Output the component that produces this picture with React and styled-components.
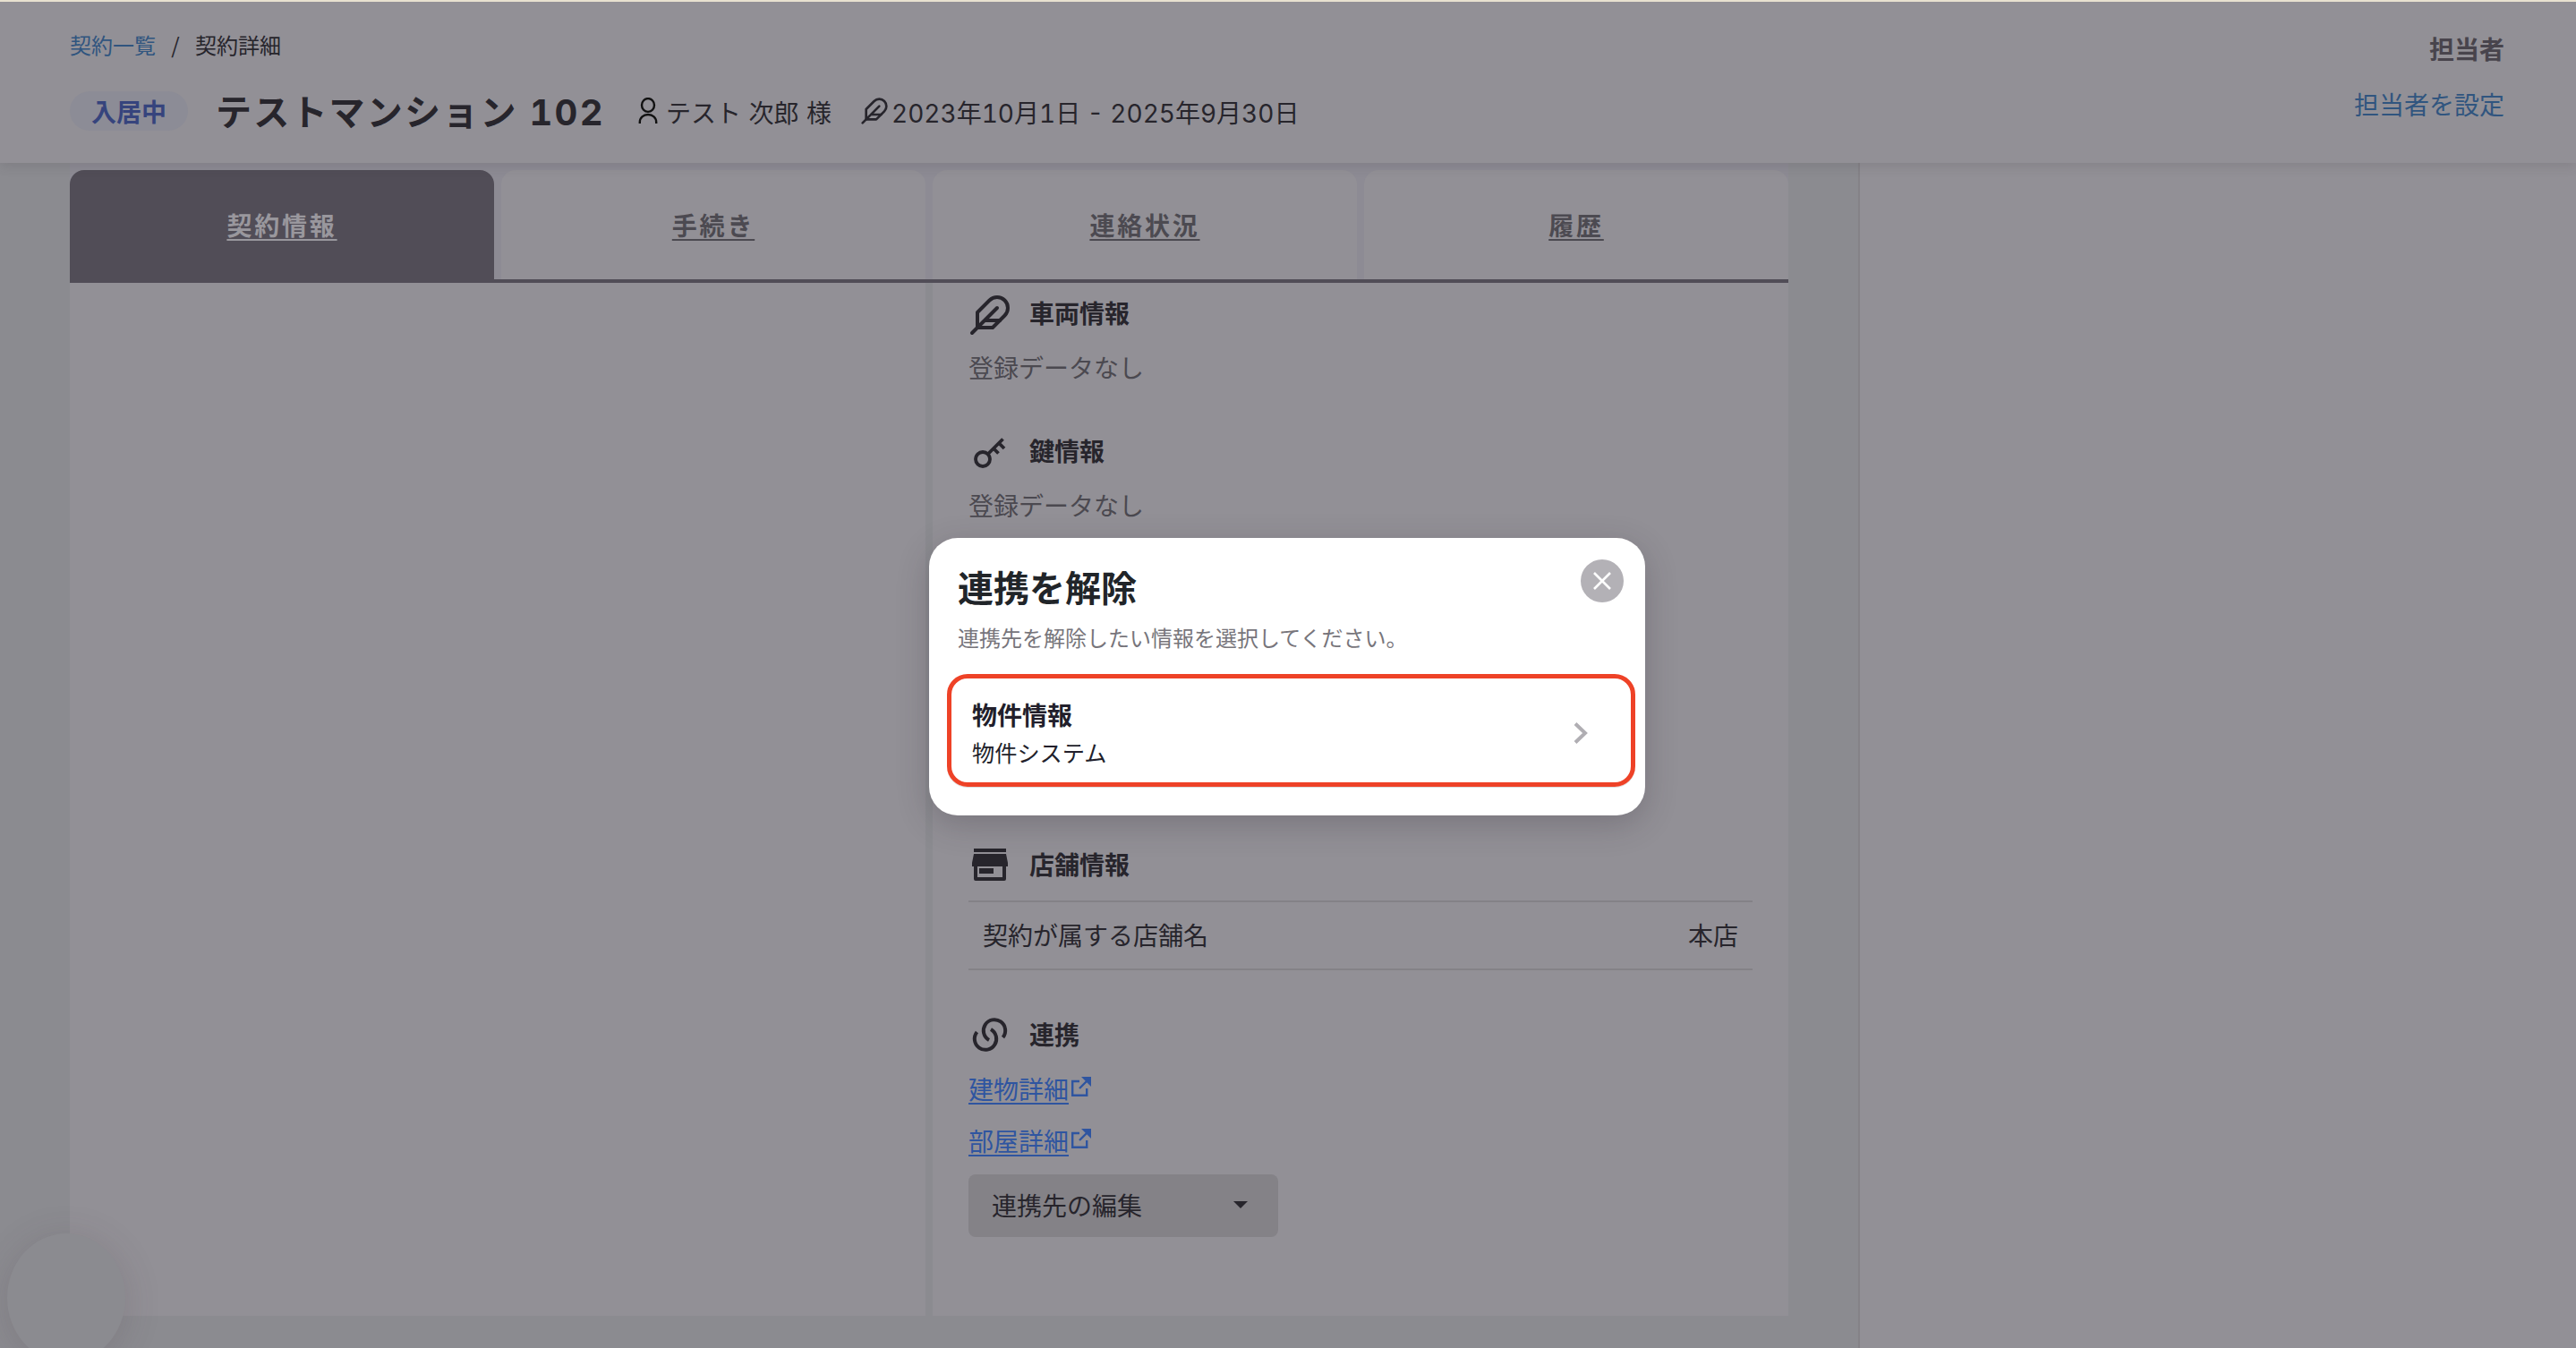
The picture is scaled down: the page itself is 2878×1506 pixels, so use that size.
import React from "react";
import styled, { createGlobalStyle } from "styled-components";

const c = {
  surface: "#929096",
  page: "#8b8b90",
  ink: "#27252c",
  muted: "#4b4950",
  tab: "#514d57",
  line: "#848287",
  link: "#30557f",
};

const GlobalStyle = createGlobalStyle`
  *, *::before, *::after { box-sizing: border-box; }
  body {
    margin: 0;
    background: ${c.page};
    color: ${c.ink};
    font-family: "Noto Sans CJK JP", sans-serif;
    font-size: 28px;
    line-height: 40px;
  }
  h1, h2, h3, p { margin: 0; }
  svg { display: block; flex: none; }
`;

const Screen = styled.div`
  height: 1506px;
  overflow: hidden;
  display: flex;
  flex-direction: column;
  position: relative;
`;

const Header = styled.header`
  flex: none;
  height: 182px;
  padding: 0 80px 0 78px;
  display: flex;
  justify-content: space-between;
  background: ${c.surface};
  border-top: 2px solid #e8e1d0;
  box-shadow: 0 4px 12px rgba(60, 50, 60, 0.14);
  position: relative;
`;

const HeaderMain = styled.div`
  padding-top: 28px;
`;

const Breadcrumb = styled.nav`
  display: flex;
  gap: 16px;
  font-size: 24px;
  line-height: 40px;
`;

const CrumbLink = styled.a`
  color: ${c.link};
`;

const Slash = styled.span`
  width: 12px;
  text-align: center;
`;

const TitleRow = styled.div`
  display: flex;
  align-items: center;
  height: 44px;
  margin-top: 32px;
`;

const Badge = styled.span`
  width: 132px;
  height: 44px;
  border-radius: 22px;
  background: #8c8c96;
  color: #36447d;
  font-weight: 700;
  line-height: 44px;
  text-align: center;
`;

const Title = styled.h1`
  width: 503px;
  padding: 4px 0 0 31px;
  font-family: Inter, "Noto Sans CJK JP", sans-serif;
  font-variant-numeric: tabular-nums;
  font-size: 40px;
  line-height: 44px;
  letter-spacing: 2.200px;
  white-space: nowrap;
`;

const Meta = styled.span`
  display: flex;
  align-items: center;
  margin-right: 32px;
  gap: ${(p) => p.$gap};
  font-family: Inter, "Noto Sans CJK JP", sans-serif;
  font-variant-numeric: tabular-nums;
  white-space: nowrap;
`;

const MetaText = styled.span`
  padding-top: 5px;
  word-spacing: ${(p) => (p.$loose ? "1px" : "0")};
`;

const Assignee = styled.div`
  padding-top: 32px;
  display: flex;
  flex-direction: column;
  align-items: flex-end;
  gap: 22px;
`;

const AssigneeLabel = styled.span`
  font-weight: 700;
  color: #48444c;
`;

const Body = styled.div`
  flex: 1;
  display: flex;
`;

const Main = styled.main`
  width: 2076px;
  padding: 0 78px 36px;
  display: flex;
  flex-direction: column;
`;

const Tabs = styled.div`
  flex: none;
  height: 134px;
  padding-top: 8px;
  display: grid;
  grid-template-columns: repeat(4, 474px);
  gap: 8px;
  background: #8d8b94;
  border-bottom: 4px solid ${c.tab};
`;

const Tab = styled.a`
  display: flex;
  justify-content: center;
  padding-top: 41px;
  border-radius: 16px 16px 0 0;
  background: ${(p) => (p.$active ? c.tab : c.surface)};
  color: ${(p) => (p.$active ? "#99979d" : "#4c4a51")};
  font-weight: 700;
  letter-spacing: 2.8px;
  text-decoration: underline;
  text-decoration-thickness: 2px;
  text-underline-offset: 4px;
`;

const Columns = styled.div`
  flex: 1;
  display: grid;
  grid-template-columns: 956px 956px;
  gap: 8px;
`;

const Column = styled.section`
  background: ${c.surface};
  padding: 12px 40px 0;
`;

const Block = styled.div`
  height: ${(p) => p.$h}px;
`;

const BlockHead = styled.div`
  display: flex;
  align-items: center;
  gap: 20px;
  height: 48px;
`;

const BlockTitle = styled.h3`
  font-size: 28px;
  line-height: 40px;
  padding-bottom: ${(p) => (p.$raised ? 6 : 2)}px;
`;

const IconBox = styled.span`
  width: 48px;
  height: 48px;
  display: grid;
  place-items: center;
`;

const Empty = styled.p`
  color: ${c.muted};
  margin-top: 14px;
`;

const Fact = styled.div`
  height: 78px;
  margin-top: 16px;
  padding: 0 16px 2px;
  display: flex;
  align-items: center;
  justify-content: space-between;
  border: solid ${c.line};
  border-width: 2px 0;
`;

const ExternalLink = styled.a`
  display: flex;
  gap: 3px;
  height: 58px;
  padding-top: 16px;
  color: #2f55a0;

  svg { margin-top: 7px; }
`;

const LinkText = styled.span`
  text-decoration: underline;
  text-decoration-thickness: 2px;
  text-underline-offset: 4px;
`;

const Select = styled.button`
  width: 346px;
  height: 70px;
  margin-top: 16px;
  padding: 0 34px 2px 26px;
  display: flex;
  align-items: center;
  justify-content: space-between;
  border: 0;
  border-radius: 8px;
  background: ${c.line};
  color: ${c.ink};
  font: inherit;
`;

const Caret = styled.span`
  border: 8px solid transparent;
  border-top-color: ${c.ink};
  border-bottom: 0;
`;

const Aside = styled.aside`
  flex: 1;
  background: ${c.surface};
  border-left: 2px solid ${c.line};
`;

const Fab = styled.div`
  position: absolute;
  left: 8px;
  top: 1378px;
  width: 132px;
  height: 144px;
  border-radius: 50%;
  background: ${c.page};
  box-shadow: 0 6px 40px rgba(70, 55, 65, 0.18);
`;

const Dialog = styled.div`
  position: absolute;
  left: 1038px;
  top: 601px;
  width: 800px;
  height: 310px;
  padding: 32px 20px 0;
  border-radius: 32px;
  background: #fff;
  box-shadow: 0 10px 36px rgba(40, 35, 45, 0.24);
`;

const DialogTitle = styled.h2`
  padding-left: 12px;
  font-size: 40px;
  line-height: 44px;
  color: #212529;
`;

const DialogText = styled.p`
  padding-left: 12px;
  margin-top: 15px;
  font-size: 24px;
  line-height: 40px;
  color: #77757b;
`;

const Close = styled.button`
  position: absolute;
  right: 24px;
  top: 24px;
  width: 48px;
  height: 48px;
  padding: 0;
  border: 0;
  border-radius: 50%;
  display: grid;
  place-items: center;
  background: #b3b1b6;
`;

const Option = styled.div`
  width: 769px;
  height: 126px;
  margin-top: 21px;
  padding: 5px 48px 0 23px;
  display: flex;
  align-items: center;
  justify-content: space-between;
  border: 5.5px solid #ee4227;
  border-radius: 23px;
  box-shadow: 0 1px 0 #ddd;
`;

const OptionTitle = styled.h3`
  font-size: 28px;
  line-height: 42px;
  color: #221f2b;
`;

const OptionSub = styled.p`
  font-size: 25.2px;
  line-height: 42px;
  color: #221f2b;
`;

const Feather = ({ size, width = 2 }) => (
  <svg width={size} height={size} viewBox="0 0 24 24" fill="none" stroke={c.ink} strokeWidth={width} strokeLinecap="round" strokeLinejoin="round">
    <path d="M20.24 12.24a6 6 0 0 0-8.49-8.49L5 10.5V19h8.5z" />
    <path d="M16 8 2 22M17.5 15H9" />
  </svg>
);

const Person = () => (
  <svg width="22" height="30" viewBox="0 0 22 30" fill="none" stroke="#111" strokeWidth="2.4">
    <ellipse cx="11" cy="8.5" rx="7" ry="7.4" />
    <path d="M1.8 29v-1.5c0-5 4-8.5 9.2-8.5s9.2 3.5 9.2 8.5V29" />
  </svg>
);

const Key = () => (
  <svg width="36" height="34" viewBox="0 0 36 34" fill="none" stroke={c.ink} strokeWidth="3.8">
    <circle cx="10" cy="24" r="8" />
    <path d="M15.500 18.500 32.500 1.500M28 6l6 6M22 12l5.500 5.500" />
  </svg>
);

const Store = () => (
  <svg width="40" height="36" viewBox="0 0 40 36" fill={c.ink}>
    <path d="M2 0h36v4H2zM2 6h36l2 10v4h-2v14q0 2-2 2H4q-2 0-2-2V20H0v-4zM6 20v12h28V20z" fillRule="evenodd" />
    <path d="M8 22h16v6H8z" />
  </svg>
);

const Chain = () => (
  <svg width="40" height="40" viewBox="0 0 40 40" fill="none" stroke={c.ink} strokeWidth="4">
    <path d="M19 26a12.200 12.200 0 1 1 15.500-3" />
    <path d="M21 14a12.200 12.200 0 1 1-15.500 3" />
  </svg>
);

const External = () => (
  <svg width="22" height="22" viewBox="0 0 22 22" fill="none" stroke="#2f55a0" strokeWidth="2.400">
    <path d="M9 5H1.200v15.800h16V13M9 13 18 4" />
    <path d="M11 0h11v11z" fill="#2f55a0" stroke="none" />
  </svg>
);

export default function App() {
  return (
    <>
      <GlobalStyle />
      <Screen>
        <Header>
          <HeaderMain>
            <Breadcrumb>
              <CrumbLink>契約一覧</CrumbLink>
              <Slash>/</Slash>
              <span>契約詳細</span>
            </Breadcrumb>
            <TitleRow>
              <Badge>入居中</Badge>
              <Title>テストマンション 102</Title>
              <Meta $gap="9px">
                <Person />
                <MetaText $loose>テスト 次郎 様</MetaText>
              </Meta>
              <Meta $gap="3px">
                <Feather size={32} />
                <MetaText>2023年10月1日 - 2025年9月30日</MetaText>
              </Meta>
            </TitleRow>
          </HeaderMain>
          <Assignee>
            <AssigneeLabel>担当者</AssigneeLabel>
            <CrumbLink>担当者を設定</CrumbLink>
          </Assignee>
        </Header>
        <Body>
          <Main>
            <Tabs>
              <Tab $active>契約情報</Tab>
              <Tab>手続き</Tab>
              <Tab>連絡状況</Tab>
              <Tab>履歴</Tab>
            </Tabs>
            <Columns>
              <Column />
              <Column>
                <Block $h={154}>
                  <BlockHead>
                    <IconBox><Feather size={48} /></IconBox>
                    <BlockTitle $raised>車両情報</BlockTitle>
                  </BlockHead>
                  <Empty>登録データなし</Empty>
                </Block>
                <Block $h={460}>
                  <BlockHead>
                    <IconBox><Key /></IconBox>
                    <BlockTitle $raised>鍵情報</BlockTitle>
                  </BlockHead>
                  <Empty>登録データなし</Empty>
                </Block>
                <Block $h={190}>
                  <BlockHead>
                    <IconBox><Store /></IconBox>
                    <BlockTitle>店舗情報</BlockTitle>
                  </BlockHead>
                  <Fact>
                    <span>契約が属する店舗名</span>
                    <span>本店</span>
                  </Fact>
                </Block>
                <BlockHead>
                  <IconBox><Chain /></IconBox>
                  <BlockTitle>連携</BlockTitle>
                </BlockHead>
                <ExternalLink><LinkText>建物詳細</LinkText><External /></ExternalLink>
                <ExternalLink><LinkText>部屋詳細</LinkText><External /></ExternalLink>
                <Select>連携先の編集<Caret /></Select>
              </Column>
            </Columns>
          </Main>
          <Aside />
        </Body>
        <Fab />
        <Dialog>
          <DialogTitle>連携を解除</DialogTitle>
          <DialogText>連携先を解除したい情報を選択してください。</DialogText>
          <Close aria-label="閉じる">
            <svg width="20" height="20" viewBox="0 0 20 20" stroke="#fff" strokeWidth="2.600"><path d="M1 1l18 18M19 1 1 19" /></svg>
          </Close>
          <Option>
            <div>
              <OptionTitle>物件情報</OptionTitle>
              <OptionSub>物件システム</OptionSub>
            </div>
            <svg width="16" height="24" viewBox="0 0 16 24" fill="none" stroke="#b0aeb3" strokeWidth="4"><path d="M2 1.500 13 12 2 22.500" /></svg>
          </Option>
        </Dialog>
      </Screen>
    </>
  );
}
